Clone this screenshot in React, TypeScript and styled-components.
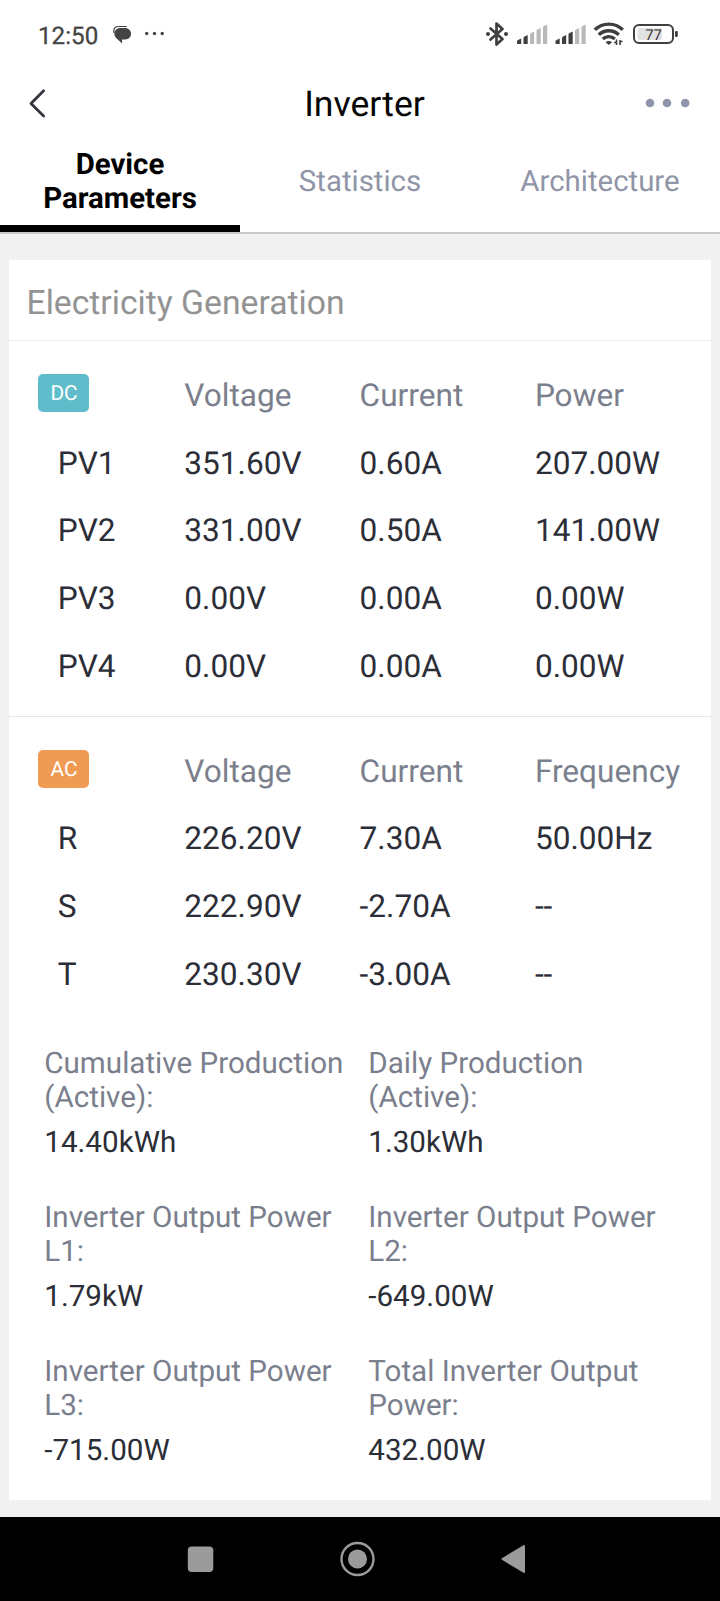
import React from "react";
import styled, { createGlobalStyle } from "styled-components";

const GlobalStyle = createGlobalStyle`
  * { box-sizing: border-box; }
  html, body { margin: 0; padding: 0; }
  body {
    background: #f1f1f1;
    font-family: Roboto, "Liberation Sans", sans-serif;
    text-rendering: geometricPrecision;
  }
`;

const Screen = styled.div`
  display: flex;
  flex-direction: column;
  width: 720px;
  height: 1601px;
  background: #f1f1f1;
  overflow: hidden;
`;

const StatusBar = styled.header`
  display: flex;
  align-items: center;
  justify-content: space-between;
  height: 70px;
  padding-left: 38px;
  background: #fff;
`;

const Clock = styled.span`
  width: 75px;
  padding-top: 2px;
  font-size: 24.2px;
  line-height: 28px;
  color: #444;
  -webkit-text-stroke: 0.3px #444;
`;

const StatusGroup = styled.div`
  display: flex;
  align-items: center;
  height: 70px;
`;

const NavBar = styled.nav`
  display: grid;
  grid-template-columns: 120px 1fr 120px;
  align-items: center;
  height: 69px;
  background: #fff;
`;

const PageTitle = styled.h1`
  margin: 0;
  padding: 0 0 2px 9px;
  text-align: center;
  font-size: 35.6px;
  font-weight: 400;
  line-height: 42px;
  color: #060606;
`;

const IconButton = styled.button`
  display: flex;
  height: 69px;
  padding: 0;
  border: 0;
  background: transparent;
`;

const Tabs = styled.div`
  display: grid;
  grid-template-columns: repeat(3, 240px);
  height: 95px;
  background: #fff;
  border-bottom: 2px solid #c9c9c9;
`;

const Tab = styled.div<{ $active?: boolean }>`
  display: flex;
  align-items: center;
  justify-content: center;
  padding: ${(p) => (p.$active ? "0 30px" : "0 0 7px")};
  text-align: center;
  font-size: 29.4px;
  line-height: 34.4px;
  font-weight: ${(p) => (p.$active ? 700 : 400)};
  color: ${(p) => (p.$active ? "#000" : "#9095a8")};
  border-bottom: ${(p) => (p.$active ? "7px solid #000" : "0")};
`;

const Content = styled.main`
  flex: 1;
  padding: 26px 9px 0;
`;

const Card = styled.section`
  height: 1239.5px;
  background: #fff;
`;

const CardTitle = styled.h2`
  margin: 0;
  height: 81px;
  padding: 24px 0 0 17.5px;
  font-size: 33.7px;
  font-weight: 400;
  line-height: 40px;
  color: #939393;
  border-bottom: 1px solid #ededed;
`;

const Readings = styled.div<{ $divided?: boolean }>`
  padding: ${(p) => (p.$divided ? "20px 0 15.8px" : "20px 0 0")};
  border-bottom: ${(p) => (p.$divided ? "1px solid #e6e6e8" : "0")};
`;

const ReadingRow = styled.div<{ $head?: boolean }>`
  display: grid;
  grid-template-columns: repeat(4, 175.3px);
  align-items: center;
  height: 67.8px;
  padding-top: 2px;
  font-size: 31.6px;
  line-height: 38px;
  color: ${(p) => (p.$head ? "#7b7f8d" : "#2c2e37")};
  white-space: nowrap;
`;

const RowName = styled.span`
  padding-left: 48.8px;
`;

const Badge = styled.span<{ $tone: string }>`
  width: 51px;
  height: 38px;
  margin: -6px 0 0 29px;
  padding-left: 1px;
  border-radius: 5px;
  background: ${(p) => p.$tone};
  color: #fff;
  font-size: 20.8px;
  line-height: 41.5px;
  text-align: center;
`;

const Totals = styled.div`
  display: grid;
  grid-template-columns: 324px 310px;
  grid-auto-rows: 154px;
  padding: 39px 0 0 35.3px;
`;

const Total = styled.div`
  font-size: 29.6px;
  line-height: 34px;
`;

const TotalLabel = styled.div`
  color: #7b7f8d;
`;

const TotalValue = styled.div`
  margin-top: 11px;
  color: #2c2e37;
`;

const SystemNav = styled.footer`
  height: 84px;
  background: #000;
`;

type Group = {
  badge: string;
  tone: string;
  heads: string[];
  rows: string[][];
};

const groups: Group[] = [
  {
    badge: "DC",
    tone: "#5fbccb",
    heads: ["Voltage", "Current", "Power"],
    rows: [
      ["PV1", "351.60V", "0.60A", "207.00W"],
      ["PV2", "331.00V", "0.50A", "141.00W"],
      ["PV3", "0.00V", "0.00A", "0.00W"],
      ["PV4", "0.00V", "0.00A", "0.00W"],
    ],
  },
  {
    badge: "AC",
    tone: "#f09b54",
    heads: ["Voltage", "Current", "Frequency"],
    rows: [
      ["R", "226.20V", "7.30A", "50.00Hz"],
      ["S", "222.90V", "-2.70A", "--"],
      ["T", "230.30V", "-3.00A", "--"],
    ],
  },
];

const totals: [string, string, string][] = [
  ["Cumulative Production", "(Active):", "14.40kWh"],
  ["Daily Production", "(Active):", "1.30kWh"],
  ["Inverter Output Power", "L1:", "1.79kW"],
  ["Inverter Output Power", "L2:", "-649.00W"],
  ["Inverter Output Power", "L3:", "-715.00W"],
  ["Total Inverter Output", "Power:", "432.00W"],
];

const NoticeIcons = () => (
  <svg width="54" height="70" viewBox="113 0 54 70" fill="#444">
    <path d="M113.800 33v-2c0-3 2-4.500 5-4.500h8" fill="none" stroke="#444" strokeWidth="1.200" />
    <path d="M120.500 28h4.300c3.800 0 6.200 2.500 6.200 5.800s-2.200 5.700-5.700 5.700h-3.200V43.500l-5.700-5.300c-1.400-1.200-2-2.700-2-4.500 0-3.300 2.500-5.700 6.100-5.700z" />
    <circle cx="146.700" cy="33.500" r="1.700" />
    <circle cx="154.500" cy="33.500" r="1.700" />
    <circle cx="162.200" cy="33.500" r="1.700" />
  </svg>
);

const SignalBars = ({ x, on }: { x: number; on: number }) => (
  <g>
    {[5, 8.5, 12, 15.5, 19].map((h, i) => (
      <path
        key={h}
        d={`M${x + i * 6.500} 44v${-h + 2.5}q0 -1 1 -1.500l3.200 -1.500v${h + 0.5}z`}
        fill={i < on ? "#3f3f3f" : "#b9b9b9"}
      />
    ))}
  </g>
);

const SystemIcons = () => (
  <svg width="240" height="70" viewBox="480 0 240 70" fill="none">
    <path d="M490.500 28.500l12 10.500-6 5.500V23.500l6 5.500L490.500 39.500" stroke="#3f3f3f" strokeWidth="2.700" strokeLinejoin="round" strokeLinecap="round" />
    <circle cx="488" cy="34" r="2" fill="#3f3f3f" />
    <circle cx="506" cy="34" r="2" fill="#3f3f3f" />
    <SignalBars x={517} on={2} />
    <SignalBars x={555.5} on={3} />
    <g stroke="#3f3f3f" strokeWidth="3.400">
      <path d="M594.800 29.800a20 20 0 0 1 28 0" />
      <path d="M598.800 34.700a14.500 14.500 0 0 1 20 0" />
      <path d="M602.800 39a8.800 8.800 0 0 1 12 0" />
    </g>
    <path d="M605.500 42.300q3.300-2.500 6.600 0l-3.300 2.700z" fill="#3f3f3f" />
    <path d="M616.500 39.500v5.500M616.500 42.500h-2.500M620 40v5M620 41.500h2.500" stroke="#3f3f3f" strokeWidth="1.600" />
    <rect x="634" y="25" width="39" height="18" rx="5" stroke="#3f3f3f" strokeWidth="2" />
    <rect x="637.500" y="28" width="24.500" height="12" rx="2" fill="#e2e2e2" />
    <rect x="675" y="31" width="2.800" height="6" rx="1" fill="#3f3f3f" />
    <text x="653.500" y="40" textAnchor="middle" fontFamily="Roboto" fontSize="14.800" fill="#333">77</text>
  </svg>
);

const BackIcon = () => (
  <svg width="60" height="69" viewBox="0 70 60 69" fill="none">
    <path d="M43.600 90.800L31 103.500L43.600 116" stroke="#34363f" strokeWidth="2.800" strokeLinecap="round" strokeLinejoin="round" />
  </svg>
);

const MoreIcon = () => (
  <svg width="120" height="69" viewBox="600 70 120 69" fill="#9095ab">
    <circle cx="650" cy="103" r="4.300" />
    <circle cx="667" cy="103" r="4.300" />
    <circle cx="685.200" cy="103" r="4.300" />
  </svg>
);

export default function App() {
  return (
    <>
      <GlobalStyle />
      <Screen>
        <StatusBar>
          <StatusGroup>
            <Clock>12:50</Clock>
            <NoticeIcons />
          </StatusGroup>
          <StatusGroup>
            <SystemIcons />
          </StatusGroup>
        </StatusBar>
        <NavBar>
          <IconButton aria-label="Back"><BackIcon /></IconButton>
          <PageTitle>Inverter</PageTitle>
          <IconButton aria-label="More"><MoreIcon /></IconButton>
        </NavBar>
        <Tabs>
          <Tab $active>Device Parameters</Tab>
          <Tab>Statistics</Tab>
          <Tab>Architecture</Tab>
        </Tabs>
        <Content>
          <Card>
            <CardTitle>Electricity Generation</CardTitle>
            {groups.map((g, i) => (
              <Readings key={g.badge} $divided={i === 0}>
                <ReadingRow $head>
                  <Badge $tone={g.tone}>{g.badge}</Badge>
                  {g.heads.map((h) => <span key={h}>{h}</span>)}
                </ReadingRow>
                {g.rows.map(([name, ...values]) => (
                  <ReadingRow key={name}>
                    <RowName>{name}</RowName>
                    {values.map((v, j) => <span key={j}>{v}</span>)}
                  </ReadingRow>
                ))}
              </Readings>
            ))}
            <Totals>
              {totals.map(([a, b, value]) => (
                <Total key={a + b}>
                  <TotalLabel>{a}<br />{b}</TotalLabel>
                  <TotalValue>{value}</TotalValue>
                </Total>
              ))}
            </Totals>
          </Card>
        </Content>
        <SystemNav>
          <svg width="720" height="84" viewBox="0 1517 720 84" fill="#9b9b9b">
            <rect x="187.800" y="1546.600" width="25.500" height="25.400" rx="4" />
            <circle cx="357.500" cy="1559" r="16" fill="none" stroke="#9b9b9b" strokeWidth="2.400" />
            <circle cx="357.500" cy="1559" r="9.500" />
            <path d="M502.500 1559L524 1546v26z" stroke="#9b9b9b" strokeWidth="2" strokeLinejoin="round" />
          </svg>
        </SystemNav>
      </Screen>
    </>
  );
}
